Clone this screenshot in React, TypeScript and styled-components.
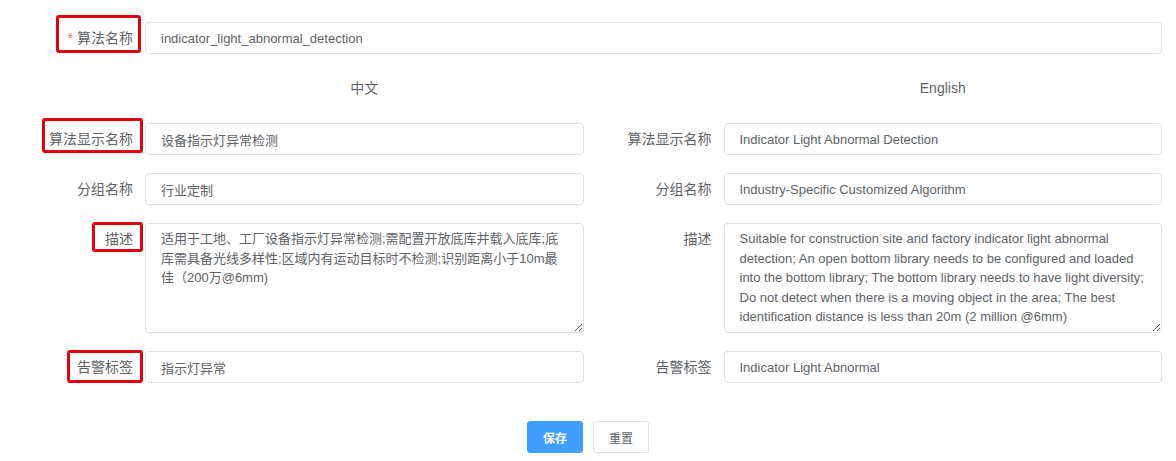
import React from "react";
import styled, { createGlobalStyle } from "styled-components";

const Global = createGlobalStyle`
  html, body { margin: 0; padding: 0; background: #ffffff; }
  body { font-family: "Liberation Sans", Arial, "Noto Sans CJK SC", sans-serif; }
`;

const Page = styled.div`
  width: 1176px;
  height: 461px;
  box-sizing: border-box;
  padding-top: 22px;
  overflow: hidden;
`;

const Form = styled.div`
  padding: 0 14px 0 45px;
  display: flex;
  flex-direction: column;
`;

const Pair = styled.div`
  display: grid;
  grid-template-columns: 1fr 1fr;
  column-gap: 40px;
`;

const Item = styled.div<{ $mb?: number }>`
  display: flex;
  align-items: flex-start;
  margin-bottom: ${(p) => p.$mb ?? 18}px;
`;

const Label = styled.label`
  position: relative;
  flex: 0 0 100px;
  box-sizing: border-box;
  padding-right: 12px;
  text-align: right;
  font-size: 14px;
  line-height: 32px;
  height: 32px;
  color: #606266;
  white-space: nowrap;
`;

const Req = styled.span`
  color: #f56c6c;
  margin-right: 4px;
`;

const Mark = styled.span<{ $l: number; $t: number; $w: number; $h: number }>`
  position: absolute;
  left: ${(p) => p.$l}px;
  top: ${(p) => p.$t}px;
  width: ${(p) => p.$w}px;
  height: ${(p) => p.$h}px;
  box-sizing: border-box;
  border: 3px solid #e2000f;
  border-radius: 3px;
  pointer-events: none;
`;

const Control = styled.div`
  flex: 1;
  min-width: 0;
`;

const Input = styled.input`
  display: block;
  width: 100%;
  box-sizing: border-box;
  height: 32px;
  padding: 0 15px;
  border: 1px solid #dcdfe6;
  border-radius: 4px;
  font-family: inherit;
  font-size: 13px;
  color: #606266;
  background: #fff;
  outline: none;
`;

const TextArea = styled.textarea`
  display: block;
  width: 100%;
  box-sizing: border-box;
  height: 110px;
  padding: 5px 15px;
  border: 1px solid #dcdfe6;
  border-radius: 4px;
  font-family: inherit;
  font-size: 13px;
  line-height: 1.5;
  color: #606266;
  background: #fff;
  resize: vertical;
  outline: none;
`;

const Heading = styled.div`
  flex: 1;
  text-align: center;
  font-size: 14px;
  line-height: 33px;
  height: 33px;
  color: #606266;
`;

const Footer = styled.div`
  display: flex;
  justify-content: center;
  gap: 10px;
  padding-top: 20px;
`;

const Button = styled.button<{ $primary?: boolean }>`
  height: 32px;
  padding: 0 15px;
  border-radius: 3px;
  font-family: inherit;
  font-size: 12px;
  font-weight: ${(p) => (p.$primary ? 700 : 400)};
  cursor: pointer;
  border: 1px solid ${(p) => (p.$primary ? "#409eff" : "#dcdfe6")};
  background: ${(p) => (p.$primary ? "#409eff" : "#ffffff")};
  color: ${(p) => (p.$primary ? "#ffffff" : "#606266")};
`;

const zhDesc =
  "适用于工地、工厂设备指示灯异常检测;需配置开放底库并载入底库;底库需具备光线多样性;区域内有运动目标时不检测;识别距离小于10m最佳（200万@6mm)";
const enDesc =
  "Suitable for construction site and factory indicator light abnormal detection; An open bottom library needs to be configured and loaded into the bottom library; The bottom library needs to have light diversity; Do not detect when there is a moving object in the area; The best identification distance is less than 20m (2 million @6mm)";

export default function App() {
  return (
    <>
      <Global />
      <Page>
        <Form>
          <Item>
            <Label>
              <Req>*</Req>算法名称
              <Mark $l={11} $t={-7} $w={85} $h={38} />
            </Label>
            <Control>
              <Input defaultValue="indicator_light_abnormal_detection" />
            </Control>
          </Item>

          <Pair>
            <Item>
              <Label />
              <Heading>中文</Heading>
            </Item>
            <Item>
              <Label />
              <Heading>English</Heading>
            </Item>
          </Pair>

          <Pair>
            <Item>
              <Label>
                算法显示名称
                <Mark $l={-3} $t={-5} $w={101} $h={35} />
              </Label>
              <Control>
                <Input defaultValue="设备指示灯异常检测" />
              </Control>
            </Item>
            <Item>
              <Label>算法显示名称</Label>
              <Control>
                <Input defaultValue="Indicator Light Abnormal Detection" />
              </Control>
            </Item>
          </Pair>

          <Pair>
            <Item>
              <Label>分组名称</Label>
              <Control>
                <Input defaultValue="行业定制" />
              </Control>
            </Item>
            <Item>
              <Label>分组名称</Label>
              <Control>
                <Input defaultValue="Industry-Specific Customized Algorithm" />
              </Control>
            </Item>
          </Pair>

          <Pair>
            <Item>
              <Label>
                描述
                <Mark $l={47} $t={-1} $w={51} $h={30} />
              </Label>
              <Control>
                <TextArea defaultValue={zhDesc} />
              </Control>
            </Item>
            <Item>
              <Label>描述</Label>
              <Control>
                <TextArea defaultValue={enDesc} />
              </Control>
            </Item>
          </Pair>

          <Pair>
            <Item>
              <Label>
                告警标签
                <Mark $l={22} $t={-1} $w={76} $h={33} />
              </Label>
              <Control>
                <Input defaultValue="指示灯异常" />
              </Control>
            </Item>
            <Item>
              <Label>告警标签</Label>
              <Control>
                <Input defaultValue="Indicator Light Abnormal" />
              </Control>
            </Item>
          </Pair>
        </Form>
        <Footer>
          <Button $primary>保存</Button>
          <Button>重置</Button>
        </Footer>
      </Page>
    </>
  );
}
